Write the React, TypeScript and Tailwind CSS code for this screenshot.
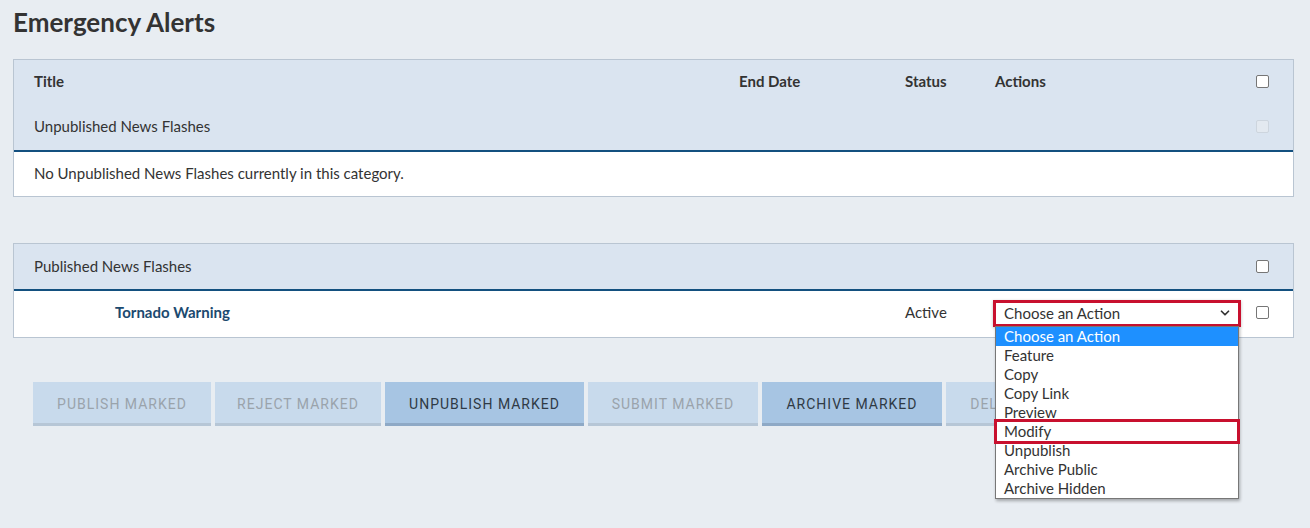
import { ChevronDown } from "lucide-react";

const font = { fontFamily: "Lato, 'Noto Sans', sans-serif" };

const Checkbox = ({ disabled = false }: { disabled?: boolean }) => (
  <span
    className={
      disabled
        ? "block w-[13px] h-[13px] rounded-[2px] border border-[#cdd5de] bg-[#e3e9f0]"
        : "block w-[13px] h-[13px] rounded-[2px] border border-[#767676] bg-white"
    }
  />
);

const options = [
  "Choose an Action",
  "Feature",
  "Copy",
  "Copy Link",
  "Preview",
  "Modify",
  "Unpublish",
  "Archive Public",
  "Archive Hidden",
];

const buttons = [
  { label: "PUBLISH MARKED", w: "w-[178px]", on: false },
  { label: "REJECT MARKED", w: "w-[166px]", on: false },
  { label: "UNPUBLISH MARKED", w: "w-[199px]", on: true },
  { label: "SUBMIT MARKED", w: "w-[170px]", on: false },
  { label: "ARCHIVE MARKED", w: "w-[180px]", on: true },
  { label: "DELETE MARKED", w: "w-[170px]", on: false },
];

export default function App() {
  return (
    <div className="min-h-[528px] bg-[#e8edf2] text-[#333] px-[13px] pt-[5px]" style={font}>
      <h1 className="text-[26px] font-bold leading-[34px] text-[#333]">Emergency Alerts</h1>

      {/* Unpublished */}
      <div className="mt-[20px] w-[1281px] border border-[#b9c5d2] bg-white">
        <div className="bg-[#dae4f0]">
          <div className="flex items-center h-[45px] pb-[2px] text-[15px] font-bold">
            <div className="w-[725px] pl-[20px]">Title</div>
            <div className="w-[166px]">End Date</div>
            <div className="w-[90px]">Status</div>
            <div className="w-[261px]">Actions</div>
            <Checkbox />
          </div>
          <div className="flex items-center h-[45px] pb-[2px] text-[15px]">
            <div className="w-[1242px] pl-[20px]">Unpublished News Flashes</div>
            <Checkbox disabled />
          </div>
        </div>
        <div className="h-[2px] bg-[#13507f]" />
        <div className="h-[44px] flex items-center pb-[2px] pl-[20px] text-[15px]">
          No Unpublished News Flashes currently in this category.
        </div>
      </div>

      {/* Published */}
      <div className="mt-[46px] w-[1281px] border border-[#b9c5d2] bg-white">
        <div className="bg-[#dae4f0] flex items-center h-[45px] pb-[1px] text-[15px]">
          <div className="w-[1242px] pl-[20px]">Published News Flashes</div>
          <Checkbox />
        </div>
        <div className="h-[2px] bg-[#13507f]" />
        <div className="h-[46px] flex items-center pb-[4px] text-[15px]">
          <div className="w-[891px] pl-[101px] font-bold text-[#1c4a6f]">Tornado Warning</div>
          <div className="w-[88px]">Active</div>
          <div className="relative w-[263px] mt-[2px]">
            <div className="w-[248px] h-[27px] border-[3px] border-[#c8102e] bg-white flex items-center justify-between pl-[8px] pr-[6px] shadow-[0_1px_3px_rgba(0,0,0,0.25)]">
              <span className="leading-none">Choose an Action</span>
              <ChevronDown size={14} strokeWidth={3} className="text-[#333]" />
            </div>
            <div className="absolute left-[2px] top-[26px] z-10 w-[244px] bg-white border border-[#777] shadow-[1px_2px_3px_rgba(0,0,0,0.3)] text-[15px]">
              {options.map((o, i) => (
                <div
                  key={o}
                  className={
                    i === 0
                      ? "h-[19px] leading-[18px] pl-[8px] bg-[#1e90ff] text-white"
                      : o === "Modify"
                      ? "relative -mx-[2px] h-[19px] leading-[18px] pl-[10px] text-[#333]"
                      : "h-[19px] leading-[18px] pl-[8px] text-[#333]"
                  }
                >
                  {o === "Modify" && (
                    <span className="absolute left-0 right-0 -top-[3px] -bottom-[3px] border-[3px] border-[#c8102e]" />
                  )}
                  {o}
                </div>
              ))}
            </div>
          </div>
          <Checkbox />
        </div>
      </div>

      {/* Bulk actions */}
      <div className="mt-[44px] ml-[20px] flex gap-[4px]" style={{ fontFamily: "Roboto, sans-serif" }}>
        {buttons.map((b) => (
          <div
            key={b.label}
            className={
              (b.on
                ? "bg-[#a7c5e3] border-b-[3px] border-[#8ea9c6] text-[#2f3a45] "
                : "bg-[#c8daec] border-b-[3px] border-[#b6c6d6] text-[#9aa3ab] ") +
              b.w +
              " h-[44px] pt-[3px] flex items-center justify-center text-[14px] tracking-[1px] whitespace-nowrap overflow-hidden"
            }
          >
            {b.label}
          </div>
        ))}
      </div>
    </div>
  );
}
